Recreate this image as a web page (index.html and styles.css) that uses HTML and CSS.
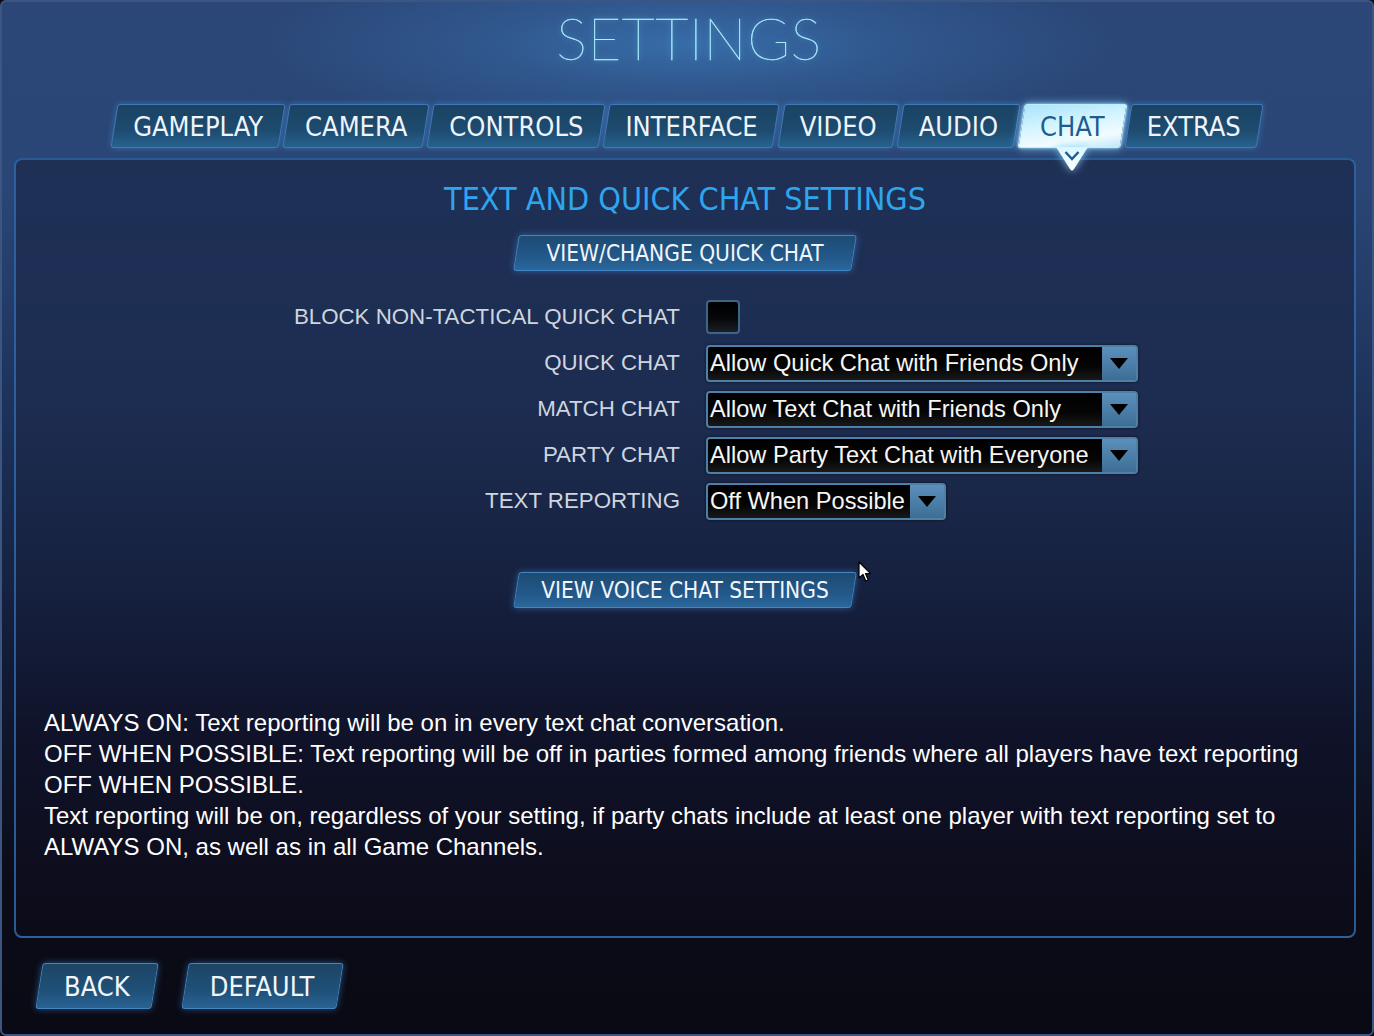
FILE: index.html
```html
<!DOCTYPE html>
<html lang="en">
<head>
<meta charset="utf-8">
<title>Settings</title>
<link rel="stylesheet" href="styles.css">
</head>
<body>
<div class="screen">
  <header class="title-wrap">
    <h1 class="title">SETTINGS</h1>
  </header>
  <nav class="tabs">
    <div class="tab"><span>GAMEPLAY</span></div>
    <div class="tab"><span>CAMERA</span></div>
    <div class="tab"><span>CONTROLS</span></div>
    <div class="tab"><span>INTERFACE</span></div>
    <div class="tab"><span>VIDEO</span></div>
    <div class="tab"><span>AUDIO</span></div>
    <div class="tab active"><span>CHAT</span>
      <svg class="pointer" width="36" height="26" viewBox="0 0 36 26">
        <defs>
          <linearGradient id="pg" x1="0" y1="0" x2="0" y2="1">
            <stop offset="0" stop-color="#d9f6ff"/>
            <stop offset="1" stop-color="#ffffff"/>
          </linearGradient>
        </defs>
        <path d="M2 0 L34 0 L20 22 Q18 25 16 22 Z" fill="url(#pg)"/>
        <path d="M11.5 5 L18 12 L24.5 5" fill="none" stroke="#1d5d8f" stroke-width="2.4"/>
      </svg>
    </div>
    <div class="tab"><span>EXTRAS</span></div>
  </nav>

  <main class="panel">
    <h2 class="subtitle">TEXT AND QUICK CHAT SETTINGS</h2>
    <div class="btn-row first">
      <div class="btn wide"><span>VIEW/CHANGE QUICK CHAT</span></div>
    </div>

    <div class="form">
      <div class="label">BLOCK NON-TACTICAL QUICK CHAT</div>
      <div class="ctl"><div class="checkbox"></div></div>

      <div class="label">QUICK CHAT</div>
      <div class="ctl"><div class="select full"><span class="value">Allow Quick Chat with Friends Only</span><span class="arrow"></span></div></div>

      <div class="label">MATCH CHAT</div>
      <div class="ctl"><div class="select full"><span class="value">Allow Text Chat with Friends Only</span><span class="arrow"></span></div></div>

      <div class="label">PARTY CHAT</div>
      <div class="ctl"><div class="select full"><span class="value">Allow Party Text Chat with Everyone</span><span class="arrow"></span></div></div>

      <div class="label">TEXT REPORTING</div>
      <div class="ctl"><div class="select"><span class="value">Off When Possible</span><span class="arrow"></span></div></div>
    </div>

    <div class="btn-row voice">
      <div class="btn wide"><span>VIEW VOICE CHAT SETTINGS</span></div>
    </div>

    <div class="desc">
      <p>ALWAYS ON: Text reporting will be on in every text chat conversation.</p>
      <p>OFF WHEN POSSIBLE: Text reporting will be off in parties formed among friends where all players have text reporting OFF WHEN POSSIBLE.</p>
      <p>Text reporting will be on, regardless of your setting, if party chats include at least one player with text reporting set to ALWAYS ON, as well as in all Game Channels.</p>
    </div>
  </main>

  <footer class="footer">
    <div class="btn big"><span>BACK</span></div>
    <div class="btn big"><span>DEFAULT</span></div>
  </footer>

  <svg class="cursor" width="14" height="22" viewBox="0 0 14 22">
    <path d="M1 1 L1 17 L5 13.5 L7.8 20 L10.2 19 L7.5 12.6 L12.5 12.6 Z" fill="#ffffff" stroke="#000000" stroke-width="1.2" stroke-linejoin="round"/>
  </svg>
</div>
</body>
</html>
```

FILE: styles.css
```css
* {
  box-sizing: border-box;
}

html, body {
  margin: 0;
  padding: 0;
  width: 1374px;
  height: 1036px;
  overflow: hidden;
  background: #0a0a15;
}

.screen {
  position: relative;
  width: 1374px;
  height: 1036px;
  border: 2px solid #3b5683;
  border-radius: 6px;
  background:
    radial-gradient(ellipse 440px 95px at 687px 42px, rgba(66, 140, 210, 0.55) 0%, rgba(66, 140, 210, 0.25) 45%, rgba(66, 140, 210, 0) 100%),
    linear-gradient(#2b4677 0%, #2a4676 18%, #1d3159 40%, #131d38 62%, #0b0c18 85%, #0a0a14 100%);
  display: flex;
  flex-direction: column;
  font-family: "Liberation Sans", Arial, sans-serif;
}

/* ---------- title ---------- */
.title-wrap {
  height: 102px;
  display: flex;
  justify-content: center;
  align-items: flex-start;
}

.title {
  margin: 0;
  padding-top: 4px;
  padding-left: 4px;
  font-family: Lato, Inter, sans-serif;
  font-weight: 200;
  font-size: 58px;
  line-height: 64px;
  letter-spacing: 0.5px;
  color: #a8eeff;
  -webkit-text-stroke: 0.4px #a8eeff;
  text-shadow: 0 0 6px rgba(120, 210, 255, 0.8);
}

/* ---------- tabs ---------- */
.tabs {
  position: relative;
  z-index: 3;
  display: flex;
  justify-content: center;
  gap: 4px;
  height: 44px;
  margin-bottom: 10px;
}

.tab {
  position: relative;
  z-index: 0;
  height: 44px;
  padding: 0 19px;
  display: flex;
  align-items: center;
  font-family: "DejaVu Sans Condensed", "DejaVu Sans", sans-serif;
  font-size: 27px;
  color: #eef4fb;
}

.tab::before {
  content: "";
  position: absolute;
  inset: 0;
  z-index: -1;
  transform: skewX(-9deg);
  background: linear-gradient(#1b4263 0%, #1d4b6f 60%, #27628f 100%);
  border: 1px solid #3d7ab6;
  border-radius: 3px;
  box-shadow: 0 0 6px rgba(80, 160, 240, 0.45);
}

.tab.active {
  color: #1d5c8e;
}

.tab.active::before {
  background: linear-gradient(170deg, #a9e4fb 0%, #d6f5ff 45%, #f2fcff 75%, #bfe8fa 100%);
  border-color: #bdefff;
  box-shadow: 0 0 10px rgba(130, 210, 255, 0.9), 0 0 3px rgba(200, 240, 255, 0.9);
}

.pointer {
  position: absolute;
  left: 50%;
  top: 43px;
  transform: translateX(-50%);
  filter: drop-shadow(0 0 4px rgba(140, 215, 255, 0.9));
}

/* ---------- panel ---------- */
.panel {
  position: relative;
  z-index: 1;
  height: 780px;
  margin: 0 16px 0 12px;
  border: 2px solid rgba(48, 104, 170, 0.85);
  border-radius: 8px;
  background: linear-gradient(#1f3056 0%, #1d2d52 30%, #16213f 55%, #0f1228 75%, #0c0b18 100%);
  display: flex;
  flex-direction: column;
}

.subtitle {
  margin: 21px 0 0;
  text-align: center;
  font-family: "DejaVu Sans Condensed", "DejaVu Sans", sans-serif;
  font-weight: normal;
  font-size: 32px;
  line-height: 37px;
  color: #2ea6ef;
}

.btn-row {
  display: flex;
  justify-content: center;
}

.btn-row.first {
  margin-top: 17px;
}

.btn-row.voice {
  margin-top: 53px;
}

.btn {
  position: relative;
  z-index: 0;
  display: flex;
  align-items: center;
  justify-content: center;
  font-family: "DejaVu Sans Condensed", "DejaVu Sans", sans-serif;
  color: #f2f6fb;
}

.btn::before {
  content: "";
  position: absolute;
  inset: 0;
  z-index: -1;
  transform: skewX(-9deg);
  background: linear-gradient(#1d4b72 0%, #22588a 60%, #2b679b 100%);
  border: 1px solid #4185c4;
  border-radius: 3px;
  box-shadow: 0 0 7px rgba(70, 150, 230, 0.5);
}

.btn.wide {
  width: 338px;
  height: 36px;
  font-size: 22.5px;
}

.btn.big {
  height: 46px;
  padding: 0 25px;
  font-size: 27px;
}

.btn.big::before {
  background: linear-gradient(#1d4565 0%, #1f5078 60%, #296394 100%);
}

/* ---------- form ---------- */
.form {
  margin-top: 28px;
  display: grid;
  grid-template-columns: 664px 1fr;
  grid-auto-rows: 36px;
  column-gap: 26px;
  row-gap: 10px;
}

.label {
  display: flex;
  align-items: center;
  justify-content: flex-end;
  font-size: 22.3px;
  color: #cdd5df;
}

.ctl {
  display: flex;
  align-items: center;
}

.checkbox {
  width: 34px;
  height: 34px;
  border: 2px solid #3b6688;
  border-radius: 4px;
  background: linear-gradient(#000 0%, #06070a 55%, #1d1f24 100%);
}

.select {
  height: 37px;
  display: flex;
  align-items: stretch;
  border: 2px solid #4e7fa6;
  border-radius: 4px;
  background: #4e7fa6;
  box-shadow: 0 0 3px rgba(0, 0, 0, 0.6);
}

.select.full {
  width: 432px;
}

.select .value {
  flex: 1;
  display: flex;
  align-items: center;
  padding: 0 5px 0 2px;
  font-size: 23.6px;
  color: #f6f6f6;
  white-space: nowrap;
  background: linear-gradient(#000 0%, #050505 60%, #191919 100%);
  border-radius: 2px 0 0 2px;
}

.select .arrow {
  width: 34px;
  position: relative;
  background: linear-gradient(#5b90ba 0%, #4a7ea8 55%, #3d6d95 100%);
  display: flex;
  align-items: center;
  justify-content: center;
}

.select .arrow::after {
  content: "";
  width: 0;
  height: 0;
  border-left: 9px solid transparent;
  border-right: 9px solid transparent;
  border-top: 11px solid #000;
}

/* ---------- description ---------- */
.desc {
  margin-top: 99px;
  padding: 0 26px 0 28px;
  font-size: 24px;
  line-height: 31px;
  color: #ffffff;
}

.desc p {
  margin: 0;
}

/* ---------- footer ---------- */
.footer {
  margin-top: 25px;
  padding-left: 37px;
  display: flex;
  gap: 30px;
}

/* ---------- cursor ---------- */
.cursor {
  position: absolute;
  left: 856px;
  top: 559px;
  z-index: 10;
}
```
